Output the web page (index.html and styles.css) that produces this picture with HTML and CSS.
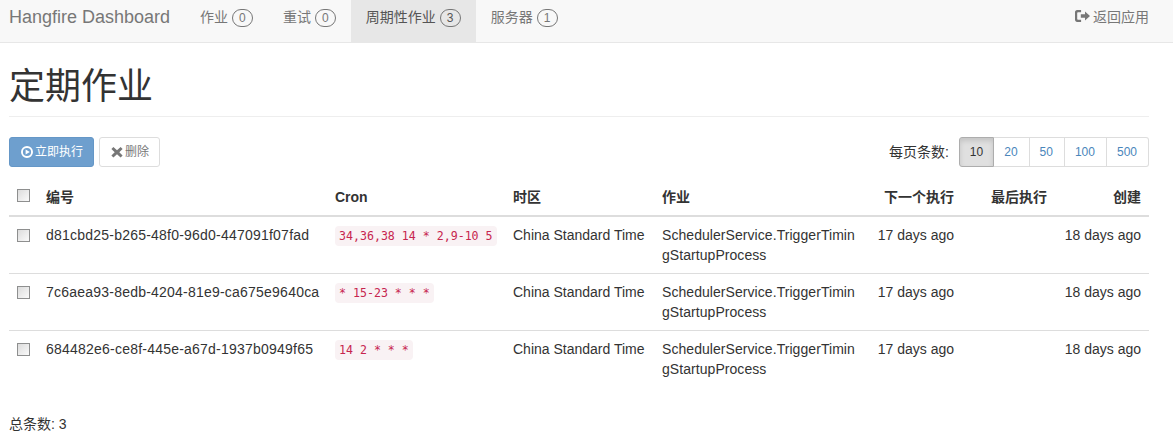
FILE: index.html
```html
<!DOCTYPE html>
<html lang="zh-CN">
<head>
    <meta charset="UTF-8">
    <title>定期作业 - Hangfire</title>
    <link rel="stylesheet" href="styles.css">
</head>
<body>
    <nav class="navbar">
        <a class="brand" href="#">Hangfire Dashboard</a>
        <ul class="nav">
            <li><a href="#">作业 <span class="metric">0</span></a></li>
            <li><a href="#">重试 <span class="metric">0</span></a></li>
            <li class="active"><a href="#">周期性作业 <span class="metric">3</span></a></li>
            <li><a href="#">服务器 <span class="metric">1</span></a></li>
        </ul>
        <a class="back" href="#">
            <svg class="icon-back" viewBox="0 0 15 14"><path d="M0 3.2C0 2 .9 1 2.1 1h4v2.2H3c-.5 0-.8.3-.8.8v6c0 .5.3.8.8.8h3.1V13h-4C.9 13 0 12 0 10.800z"/><path d="M5.800 5.300h4.200V2.400L15 7l-5 4.600V8.700H5.800z"/></svg>
            <span>返回应用</span>
        </a>
    </nav>

    <main class="page">
        <h1 class="page-header">定期作业</h1>

        <div class="toolbar">
            <button class="btn btn-primary" type="button">
                <svg class="icon" viewBox="0 0 12 12"><path fill-rule="evenodd" d="M6 0a6 6 0 1 1 0 12A6 6 0 0 1 6 0zm0 1.900a4.100 4.100 0 1 0 0 8.200 4.100 4.100 0 0 0 0-8.200z"/><path d="M4.600 3.500 8.800 6 4.600 8.500z"/></svg>
                <span>立即执行</span>
            </button>
            <button class="btn btn-default" type="button">
                <svg class="icon" viewBox="0 0 12 12"><path d="M2.400 1 6 4.300 9.600 1l2 2.100L8.300 6.200l3.300 3.300-2 2L6 8.200l-3.600 3.300-2-2 3.300-3.300L.4 3.100z"/></svg>
                <span>删除</span>
            </button>
            <div class="page-size">
                <span class="page-size-label">每页条数:</span>
                <div class="btn-group">
                    <a class="size active" href="#">10</a>
                    <a class="size" href="#">20</a>
                    <a class="size" href="#">50</a>
                    <a class="size" href="#">100</a>
                    <a class="size" href="#">500</a>
                </div>
            </div>
        </div>

        <table class="table">
            <colgroup>
                <col class="col-check">
                <col class="col-id">
                <col class="col-cron">
                <col class="col-zone">
                <col class="col-job">
                <col class="col-next">
                <col class="col-last">
                <col class="col-created">
            </colgroup>
            <thead>
                <tr>
                    <th><input class="check" type="checkbox"></th>
                    <th>编号</th>
                    <th>Cron</th>
                    <th>时区</th>
                    <th>作业</th>
                    <th class="right">下一个执行</th>
                    <th class="right">最后执行</th>
                    <th class="right">创建</th>
                </tr>
            </thead>
            <tbody>
                <tr>
                    <td><input class="check" type="checkbox"></td>
                    <td class="job-id">d81cbd25-b265-48f0-96d0-447091f07fad</td>
                    <td><code>34,36,38 14 * 2,9-10 5</code></td>
                    <td>China Standard Time</td>
                    <td class="job">SchedulerService.TriggerTimingStartupProcess</td>
                    <td class="right">17 days ago</td>
                    <td class="right"></td>
                    <td class="right">18 days ago</td>
                </tr>
                <tr>
                    <td><input class="check" type="checkbox"></td>
                    <td class="job-id">7c6aea93-8edb-4204-81e9-ca675e9640ca</td>
                    <td><code>* 15-23 * * *</code></td>
                    <td>China Standard Time</td>
                    <td class="job">SchedulerService.TriggerTimingStartupProcess</td>
                    <td class="right">17 days ago</td>
                    <td class="right"></td>
                    <td class="right">18 days ago</td>
                </tr>
                <tr>
                    <td><input class="check" type="checkbox"></td>
                    <td class="job-id">684482e6-ce8f-445e-a67d-1937b0949f65</td>
                    <td><code>14 2 * * *</code></td>
                    <td>China Standard Time</td>
                    <td class="job">SchedulerService.TriggerTimingStartupProcess</td>
                    <td class="right">17 days ago</td>
                    <td class="right"></td>
                    <td class="right">18 days ago</td>
                </tr>
            </tbody>
        </table>

        <p class="total">总条数: 3</p>
    </main>
</body>
</html>
```

FILE: styles.css
```css
* {
    box-sizing: border-box;
}

body {
    margin: 0;
    font-family: "Liberation Sans", "Noto Sans CJK SC", sans-serif;
    font-size: 14px;
    line-height: 20px;
    color: #333;
    background-color: #fff;
    overflow: hidden;
}

a {
    text-decoration: none;
}

.icon {
    flex: none;
    width: 12px;
    height: 12px;
    fill: currentColor;
}

/* navbar */
.navbar {
    display: flex;
    height: 43px;
    padding: 0 24px 0 9px;
    background-color: #f8f8f8;
    border-bottom: 1px solid #e7e7e7;
}

.brand {
    width: 176px;
    font-size: 18px;
    line-height: 35px;
    color: #777;
}

.nav {
    display: flex;
    margin: 0;
    padding: 0;
    list-style: none;
}

.nav a {
    display: block;
    height: 42px;
    padding: 7px 15px 0;
    line-height: 20px;
    color: #777;
}

.nav .active a {
    color: #555;
    background-color: #e7e7e7;
}

.metric {
    display: inline-block;
    min-width: 21px;
    height: 18px;
    padding: 0 6px;
    font-size: 12px;
    line-height: 16px;
    text-align: center;
    border: 1px solid #777;
    border-radius: 10px;
}

.back {
    display: flex;
    align-items: flex-start;
    gap: 3px;
    margin-left: auto;
    padding-top: 7px;
    color: #777;
}

.icon-back {
    width: 15px;
    height: 14px;
    margin-top: 2px;
    fill: currentColor;
}

/* page */
.page {
    padding: 0 24px 0 9px;
}

.page-header {
    margin: 0;
    height: 74px;
    padding-top: 24px;
    font-size: 36px;
    font-weight: 400;
    line-height: 40px;
    color: #333;
    border-bottom: 1px solid #eee;
}

.toolbar {
    display: flex;
    align-items: center;
    gap: 5px;
    margin-top: 20px;
}

.btn {
    display: flex;
    align-items: center;
    gap: 2px;
    height: 30px;
    padding: 0 10px 0 11px;
    font-family: inherit;
    font-size: 12px;
    line-height: 18px;
    border: 1px solid;
    border-radius: 3px;
}

.btn-primary {
    color: #fff;
    background-color: #6e9fce;
    border-color: #6597c7;
}

.btn-default {
    color: #777;
    background-color: #fff;
    border-color: #ddd;
}

.page-size {
    display: flex;
    align-items: center;
    margin-left: auto;
}

.page-size-label {
    margin-right: 10px;
}

.btn-group {
    display: flex;
}

.size {
    height: 30px;
    padding: 0 11px 0 10px;
    font-size: 12px;
    line-height: 28px;
    color: #4a86bb;
    border: 1px solid #ddd;
    border-left: 0;
}

.size:first-child {
    border-left: 1px solid #adadad;
    border-radius: 3px 0 0 3px;
}

.size:last-child {
    border-radius: 0 3px 3px 0;
}

.size.active {
    padding-right: 10px;
    color: #333;
    background-color: #e0e0e0;
    border-color: #adadad;
    box-shadow: inset 0 3px 5px rgba(0, 0, 0, 0.125);
}

/* table */
.table {
    width: 100%;
    margin-top: 10px;
    table-layout: fixed;
    border-collapse: collapse;
}

.col-check { width: 29px; }
.col-id { width: 289px; }
.col-cron { width: 178px; }
.col-zone { width: 149px; }
.col-job { width: 210px; }
.col-next { width: 98px; }
.col-last { width: 93px; }
.col-created { width: 94px; }

.table th {
    height: 39px;
    padding: 10px 8px 7px;
    text-align: left;
    vertical-align: top;
    border-bottom: 2px solid #ddd;
}

.table th .check {
    margin-top: 2px;
}

.table td {
    height: 57px;
    padding: 8px;
    vertical-align: top;
    border-bottom: 1px solid #ddd;
}

.table tbody tr:last-child td {
    border-bottom: 0;
}

.table .right {
    text-align: right;
}

.job-id {
    letter-spacing: 0.22px;
    white-space: nowrap;
}

.job {
    letter-spacing: 0.06px;
    word-break: break-all;
}

.check {
    display: block;
    width: 13px;
    height: 13px;
    margin: 4px 0 0;
    appearance: none;
    background: linear-gradient(135deg, #dcdcdc, #fafafa);
    border: 1px solid #8e8f8f;
}

code {
    padding: 3px 4px;
    font-family: "DejaVu Sans Mono", monospace;
    font-size: 11.6px;
    color: #c7254e;
    background-color: #f9f2f4;
    border-radius: 4px;
}

.total {
    margin: 26px 0 0;
}
```
